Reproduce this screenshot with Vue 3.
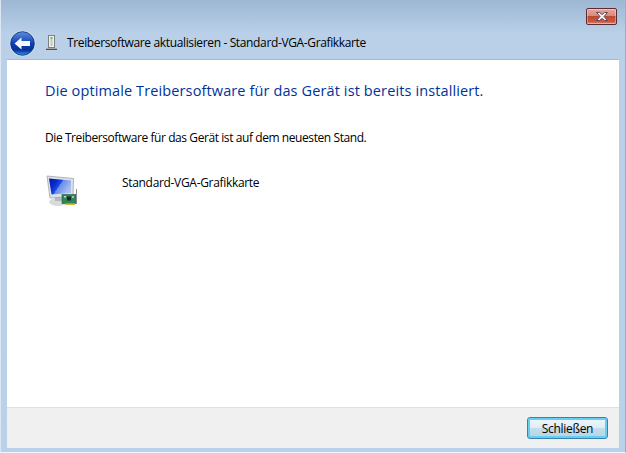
<script setup>
const title = 'Treibersoftware aktualisieren - Standard-VGA-Grafikkarte'
const heading = 'Die optimale Treibersoftware für das Gerät ist bereits installiert.'
const message = 'Die Treibersoftware für das Gerät ist auf dem neuesten Stand.'
const device = 'Standard-VGA-Grafikkarte'
</script>

<template>
  <div class="window">
    <header class="chrome">
      <div class="caption">
        <button class="close" aria-label="Schließen">
          <svg width="16" height="11" viewBox="0 0 16 11">
            <path d="M2.500 1.500h3l2.500 2 2.500-2h3l-3.500 4 3.500 4h-3l-2.500-2-2.500 2h-3l3.500-4z" fill="#f1f1f4" stroke="#5b4a5c" stroke-width="1"/>
          </svg>
        </button>
      </div>
      <div class="nav">
        <svg class="back" width="27" height="27" viewBox="0 0 27 27">
          <defs>
            <linearGradient id="orb" x1="0" y1="0" x2="0" y2="1">
              <stop offset="0" stop-color="#5f8fe0"/>
              <stop offset="0.5" stop-color="#0f3fb0"/>
              <stop offset="0.78" stop-color="#07309a"/>
              <stop offset="1" stop-color="#2f9fe8"/>
            </linearGradient>
          </defs>
          <circle cx="13.500" cy="13.500" r="13" fill="#d5e3f2" opacity=".7"/>
          <circle cx="13.500" cy="13.500" r="11.800" fill="url(#orb)" stroke="#0a2c78" stroke-width=".8"/>
          <path d="M5.500 13.500 12.500 7.500v3.500h8.500v5h-8.500v3.500z" fill="#f4f7fc"/>
        </svg>
        <svg class="device-small" width="11" height="16" viewBox="0 0 11 16">
          <rect x="2.500" y="0.500" width="6" height="12" fill="#eef0ee" stroke="#7d8080"/>
          <rect x="4.500" y="2" width="2" height="2" fill="#5fc04f"/>
          <rect x="4.500" y="4" width="2" height="7" fill="#c4c8c6"/>
          <rect x="0" y="13" width="11" height="1" fill="#a5a7a7"/>
          <rect x="0" y="14" width="11" height="1" fill="#4e5052"/>
        </svg>
        <span class="title">{{ title }}</span>
      </div>
    </header>

    <main class="panel">
      <section class="body">
        <h1 class="heading">{{ heading }}</h1>
        <p class="message">{{ message }}</p>
        <div class="device">
          <svg class="device-icon" width="32" height="32" viewBox="0 0 32 32">
            <defs>
              <linearGradient id="screen" x1="0" y1="0" x2="1" y2="0.500">
                <stop offset="0" stop-color="#06129a"/>
                <stop offset="0.35" stop-color="#0a2ad0"/>
                <stop offset="0.55" stop-color="#1a50e8"/>
                <stop offset="0.56" stop-color="#6a8ae6"/>
                <stop offset="1" stop-color="#a9bdf0"/>
              </linearGradient>
            </defs>
            <ellipse cx="13" cy="27" rx="9" ry="4" fill="#d8dadb"/>
            <rect x="10" y="21" width="7" height="5" fill="#b5b9bc"/>
            <path d="M2 1 28.500 3.500 28 21.500 5 23z" fill="#dde2e6" stroke="#a0a6ac" stroke-width=".8"/>
            <path d="M4 3.500 26 5.500 25.800 18 6.500 19.500z" fill="url(#screen)"/>
            <rect x="17" y="19.500" width="14" height="9" fill="#2f8458" stroke="#1f5f42" stroke-width=".6"/>
            <rect x="22" y="21.500" width="4" height="4" fill="#1b2b28"/>
            <rect x="19" y="21" width="2" height="1.500" fill="#cfd8c0"/>
            <rect x="27" y="21" width="2" height="2" fill="#a8c8a0"/>
            <rect x="20" y="28.500" width="10" height="1.500" fill="#d8b93a"/>
            <rect x="31" y="14" width="1" height="15" fill="#8a8f94"/>
          </svg>
          <span class="device-name">{{ device }}</span>
        </div>
      </section>
      <footer class="footer">
        <button class="primary">Schließen</button>
      </footer>
    </main>
  </div>
</template>

<style>
html, body { margin: 0; padding: 0; overflow: hidden; }
</style>

<style scoped>
.window {
  width: 626px;
  height: 453px;
  box-sizing: border-box;
  display: flex;
  flex-direction: column;
  padding: 0 6px 4px 6px;
  border-left: 1px solid #dce7f3;
  border-right: 1px solid #5cc6ee;
  border-bottom: 1px solid #f2f6fb;
  background: linear-gradient(to bottom, #9db8d4 0, #b9d0e8 34px, #b9d1ea 100%);
  font-family: "Open Sans", "Noto Sans", sans-serif;
  color: #000;
}
.chrome {
  height: 60px;
  flex: none;
  display: flex;
  flex-direction: column;
}
.caption {
  height: 28px;
  padding: 8px 2px 0 0;
  box-sizing: border-box;
  display: flex;
  justify-content: flex-end;
  align-items: flex-start;
}
.close {
  width: 31px;
  height: 17px;
  padding: 0;
  border: 1px solid #5a2a36;
  border-radius: 2px;
  display: flex;
  align-items: center;
  justify-content: center;
  background: linear-gradient(to bottom, #e8a69a 0, #d98a7c 45%, #bb4a33 50%, #c95a42 85%, #e09080 100%);
  box-shadow: inset 0 0 0 1px rgba(255,255,255,.35);
}
.nav {
  display: flex;
  align-items: center;
  height: 28px;
  margin-top: 1px;
  margin-left: 2px;
}
.back { flex: none; }
.device-small { flex: none; margin-left: 10px; }
.title {
  margin-left: 10px;
  font-size: 12px;
  line-height: 16px;
  letter-spacing: -0.36px;
  color: #000;
  white-space: nowrap;
}
.panel {
  flex: 1;
  min-height: 0;
  display: flex;
  flex-direction: column;
  background: #fff;
  box-shadow: 0 -1px 0 #a3bbd4;
}
.body {
  flex: 1;
  min-height: 0;
  padding: 20px 38px 0;
  box-sizing: border-box;
}
.heading {
  margin: 0;
  font-size: 14.500px;
  line-height: 22px;
  letter-spacing: 0.12px;
  font-weight: 400;
  color: #003399;
  white-space: nowrap;
}
.message {
  margin: 28px 0 0;
  font-size: 12px;
  line-height: 16px;
  letter-spacing: -0.42px;
  white-space: nowrap;
}
.device {
  margin-top: 29px;
  display: flex;
  align-items: flex-start;
}
.device-icon { flex: none; }
.device-name {
  margin-left: 45px;
  font-size: 12px;
  line-height: 16px;
  letter-spacing: -0.32px;
  white-space: nowrap;
}
.footer {
  flex: none;
  height: 41px;
  box-sizing: border-box;
  border-top: 1px solid #dfdfdf;
  background: #f0f0f0;
  display: flex;
  justify-content: flex-end;
  align-items: flex-start;
  padding: 9px 11px 0 0;
}
.primary {
  width: 81px;
  height: 22px;
  padding: 0;
  border: 1px solid #3c7fb1;
  border-radius: 3px;
  font-family: inherit;
  font-size: 12px;
  letter-spacing: -0.3px;
  color: #000;
  background: linear-gradient(to bottom, #f0f6fa 0, #e0edf5 48%, #c4dcec 52%, #b9d3e3 100%);
  box-shadow: inset 0 0 0 2px #63d0f2;
}
</style>
